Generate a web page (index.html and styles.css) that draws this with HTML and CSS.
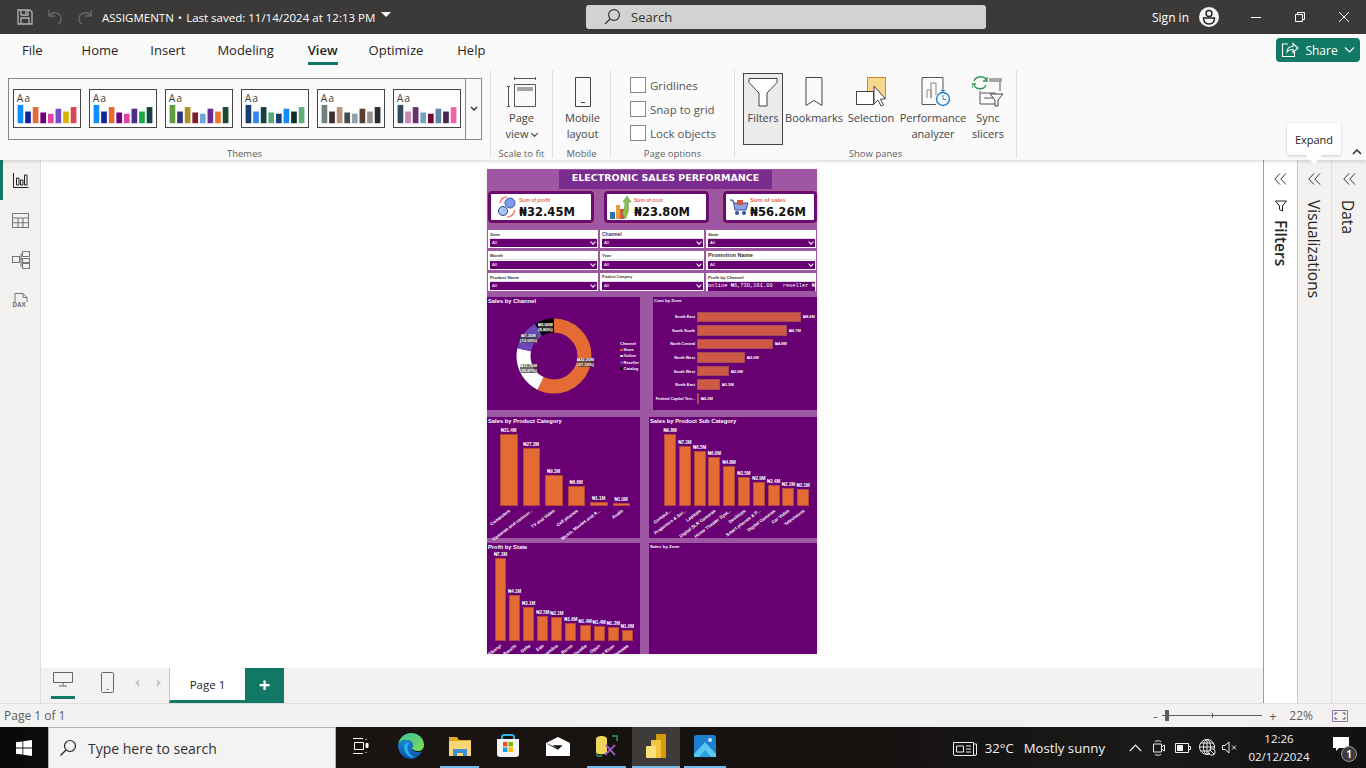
FILE: index.html
```html
<!DOCTYPE html>
<html lang="en">
  <head>
    <meta charset="utf-8">
    <link rel="stylesheet" href="styles.css">
    <title>ASSIGMENTN</title>
  </head>
  <body>
    <!-- title bar -->
    <header class="titlebar">
      <div class="quick">
        <svg class="qa" width="18" height="18" viewBox="0 0 18 18" fill="none" stroke="#b3b1af" stroke-width="1.3"><path d="M2 2h12l2 2v12H2z"/><path d="M5 2v5h7V2M5 16v-6h8v6"/><path d="M10 3v3"/></svg>
        <svg class="qa" width="18" height="18" viewBox="0 0 18 18" fill="none" stroke="#6b6a69" stroke-width="1.3"><path d="M3 2v6h6"/><path d="M3 8c3-5 11-4 12 2 .4 3-1 5-3 6"/></svg>
        <svg class="qa" width="18" height="18" viewBox="0 0 18 18" fill="none" stroke="#6b6a69" stroke-width="1.3"><path d="M15 2v6H9"/><path d="M15 8C12 3 4 4 3 10c-.4 3 1 5 3 6"/></svg>
      </div>
      <div class="doc-name">ASSIGMENTN <span class="doc-dot">•</span> Last saved: 11/14/2024 at 12:13 PM</div>
      <span class="doc-caret"></span>
      <div class="search">
        <svg width="18" height="18" viewBox="0 0 18 18" fill="none" stroke="#333" stroke-width="1.2"><circle cx="11" cy="7" r="5.4"/><path d="M7 11l-5 5"/></svg>
        <span>Search</span>
      </div>
      <div class="sign">
        <span>Sign in</span>
        <svg width="20" height="20" viewBox="0 0 20 20"><circle cx="10" cy="10" r="10" fill="#f3f2f1"/><circle cx="10" cy="6.5" r="3" fill="none" stroke="#222" stroke-width="1.4"/><path d="M4.5 11h11c0 4-2.5 6-5.5 6s-5.5-2-5.5-6z" fill="none" stroke="#222" stroke-width="1.4"/></svg>
      </div>
      <div class="win-btns">
        <svg width="12" height="12" viewBox="0 0 12 12" stroke="#fff" fill="none"><path d="M1 6.5h10"/></svg>
        <svg width="12" height="12" viewBox="0 0 12 12" stroke="#fff" fill="none"><path d="M1.5 3.5h7v7h-7zM3.5 3.5v-2h7v7h-2"/></svg>
        <svg width="12" height="12" viewBox="0 0 12 12" stroke="#fff" fill="none"><path d="M1 1l10 10M11 1L1 11"/></svg>
      </div>
    </header>

    <!-- ribbon -->
    <section class="ribbon">
      <nav class="tabs">
        <a>File</a>
        <a class="tab-home">Home</a>
        <a>Insert</a>
        <a>Modeling</a>
        <a class="active">View</a>
        <a class="tab-optimize">Optimize</a>
        <a class="tab-help">Help</a>
        <button class="share">
          <svg width="18" height="16" viewBox="0 0 18 16" fill="none" stroke="#fff" stroke-width="1.1"><path d="M7 2H1.5v12.5h12V10"/><path d="M6 10c0-4 3-5.5 6-5.5V1.5L17 6l-5 4.5v-3c-3 0-5 1-6 2.500z"/></svg>
          <span>Share</span>
          <svg width="11" height="8" viewBox="0 0 11 8" fill="none" stroke="#fff" stroke-width="1.1"><path d="M1 1.5l4.5 4.5L10 1.5"/></svg>
        </button>
      </nav>
      <div class="ribbon-body">
        <div class="group group-themes">
          <div class="gallery">
            <div class="gallery-items">
              <svg class="theme" width="68" height="39" viewBox="0 0 68 39"><text x="2" y="13">Aa</text><rect x="3" y="15.7" width="6" height="19.3" fill="#118dff"/><rect x="11" y="22.7" width="6" height="12.3" fill="#12239e"/><rect x="19" y="18" width="6" height="17" fill="#e66c37"/><rect x="27" y="23.7" width="6" height="11.3" fill="#6b007b"/><rect x="35" y="25" width="6" height="10" fill="#e044a7"/><rect x="43" y="19.7" width="6" height="15.3" fill="#744ec2"/><rect x="51" y="22.7" width="6" height="12.3" fill="#d9b300"/><rect x="59" y="18" width="6" height="17" fill="#d64550"/></svg>
              <svg class="theme" width="68" height="39" viewBox="0 0 68 39"><text x="2" y="13">Aa</text><rect x="3" y="15.7" width="6" height="19.3" fill="#118dff"/><rect x="11" y="22.7" width="6" height="12.3" fill="#12239e"/><rect x="19" y="18" width="6" height="17" fill="#e66c37"/><rect x="27" y="23.7" width="6" height="11.3" fill="#6b007b"/><rect x="35" y="25" width="6" height="10" fill="#e044a7"/><rect x="43" y="19.7" width="6" height="15.3" fill="#4b2e83"/><rect x="51" y="22.7" width="6" height="12.3" fill="#1aab40"/><rect x="59" y="18" width="6" height="17" fill="#15423e"/></svg>
              <svg class="theme" width="68" height="39" viewBox="0 0 68 39"><text x="2" y="13">Aa</text><rect x="3" y="15.7" width="6" height="19.3" fill="#5f9e3f"/><rect x="11" y="22.7" width="6" height="12.3" fill="#2f3a75"/><rect x="19" y="18" width="6" height="17" fill="#ae8f26"/><rect x="27" y="23.7" width="6" height="11.3" fill="#7f1d2b"/><rect x="35" y="25" width="6" height="10" fill="#6ea5d8"/><rect x="43" y="19.7" width="6" height="15.3" fill="#6b2a90"/><rect x="51" y="22.7" width="6" height="12.3" fill="#e8772e"/><rect x="59" y="18" width="6" height="17" fill="#1c4a2e"/></svg>
              <svg class="theme" width="68" height="39" viewBox="0 0 68 39"><text x="2" y="13">Aa</text><rect x="3" y="15.7" width="6" height="19.3" fill="#16406f"/><rect x="11" y="22.7" width="6" height="12.3" fill="#2f86f0"/><rect x="19" y="18" width="6" height="17" fill="#15423e"/><rect x="27" y="23.7" width="6" height="11.3" fill="#5aa877"/><rect x="35" y="25" width="6" height="10" fill="#143e70"/><rect x="43" y="19.7" width="6" height="15.3" fill="#118dff"/><rect x="51" y="22.7" width="6" height="12.3" fill="#0f2e2a"/><rect x="59" y="18" width="6" height="17" fill="#62ac7c"/></svg>
              <svg class="theme" width="68" height="39" viewBox="0 0 68 39"><text x="2" y="13">Aa</text><rect x="3" y="15.7" width="6" height="19.3" fill="#738080"/><rect x="11" y="22.7" width="6" height="12.3" fill="#3e2e2a"/><rect x="19" y="18" width="6" height="17" fill="#b79479"/><rect x="27" y="23.7" width="6" height="11.3" fill="#434c50"/><rect x="35" y="25" width="6" height="10" fill="#8fa3a8"/><rect x="43" y="19.7" width="6" height="15.3" fill="#5c3d30"/><rect x="51" y="22.7" width="6" height="12.3" fill="#9a948d"/><rect x="59" y="18" width="6" height="17" fill="#2a2d2e"/></svg>
              <svg class="theme" width="68" height="39" viewBox="0 0 68 39"><text x="2" y="13">Aa</text><rect x="3" y="15.7" width="6" height="19.3" fill="#344a5f"/><rect x="11" y="22.7" width="6" height="12.3" fill="#c987b0"/><rect x="19" y="18" width="6" height="17" fill="#66336e"/><rect x="27" y="23.7" width="6" height="11.3" fill="#78a0c0"/><rect x="35" y="25" width="6" height="10" fill="#6e0a35"/><rect x="43" y="19.7" width="6" height="15.3" fill="#5f86a8"/><rect x="51" y="22.7" width="6" height="12.3" fill="#45264f"/><rect x="59" y="18" width="6" height="17" fill="#ee66a6"/></svg>
            </div>
            <div class="gallery-more"><svg width="8" height="6" viewBox="0 0 8 6" fill="none" stroke="#333" stroke-width="1.5"><path d="M1 1l3 3 3-3"/></svg></div>
          </div>
          <div class="group-label">Themes</div>
        </div>

        <div class="group group-scale">
          <div class="rib-btn">
            <svg width="30" height="30" viewBox="0 0 30 30" fill="none" stroke="#555"><path d="M7.5 1.5h21M7.5 0v3M28.5 0v3M1.5 9.5v20M0 9.5h3M0 29.5h3"/><path d="M7.5 7.5h21v22h-21z"/><rect x="10" y="10" width="16" height="4" fill="#a6a6a6" stroke="none"/></svg>
            <span>Page<br>view <i class="mini-chev"></i></span>
          </div>
          <div class="group-label">Scale to fit</div>
        </div>

        <div class="group group-mobile">
          <div class="rib-btn">
            <svg width="18" height="30" viewBox="0 0 18 30" fill="none" stroke="#444"><path d="M1.5.5h15v29h-15z"/><path d="M7 25.5h4"/></svg>
            <span>Mobile<br>layout</span>
          </div>
          <div class="group-label">Mobile</div>
        </div>

        <div class="group group-options">
          <div class="checks">
            <label class="check"><i></i>Gridlines</label>
            <label class="check"><i></i>Snap to grid</label>
            <label class="check"><i></i>Lock objects</label>
          </div>
          <div class="group-label">Page options</div>
        </div>

        <div class="group group-panes">
          <div class="pane-btns">
            <div class="rib-btn pane-filters selected">
              <svg width="30" height="30" viewBox="0 0 30 30" fill="#fff" stroke="#444"><path d="M1 1.5h28v4L19 16v13h-8V16L1 5.5z"/></svg>
              <span>Filters</span>
            </div>
            <div class="rib-btn pane-bookmarks">
              <svg width="18" height="30" viewBox="0 0 18 30" fill="none" stroke="#444"><path d="M1 .5h16v28l-8-5-8 5z"/></svg>
              <span>Bookmarks</span>
            </div>
            <div class="rib-btn pane-selection">
              <svg width="32" height="30" viewBox="0 0 32 30"><rect x="11.5" y=".5" width="18" height="20" fill="#f8d78e" stroke="#d9822b"/><rect x=".5" y="14.5" width="17" height="13" fill="#fff" stroke="#444"/><path d="M18 9v18l4-4 3 6 2.5-1-3-6h5z" fill="#fff" stroke="#444"/></svg>
              <span>Selection</span>
            </div>
            <div class="rib-btn pane-perf">
              <svg width="30" height="30" viewBox="0 0 30 30" fill="none"><path d="M22 16V.5H1v27h14" stroke="#555"/><path d="M6 21v-8h4v8M10 21V6h5v12" stroke="#888"/><circle cx="22" cy="22" r="6.5" fill="#fff" stroke="#1b84d4" stroke-width="1.4"/><path d="M22 18v4.500h3M20 13.500h4" stroke="#1b84d4"/></svg>
              <span>Performance<br>analyzer</span>
            </div>
            <div class="rib-btn pane-sync">
              <svg width="32" height="32" viewBox="0 0 32 32" fill="none"><path d="M17 3h13v4H17z" fill="#a6a6a6"/><path d="M8 16v13h16M28 7v9M9 18h14v5H12" stroke="#555"/><path d="M14 5c-2-5-10-4-12 1M2 10c2 5 10 5 12 0M11 6h4V2M4 9H0v4" stroke="#2f9a57" stroke-width="1.4"/><path d="M18 19h13l-5 6v6h-3v-6z" fill="#fff" stroke="#444"/></svg>
              <span>Sync<br>slicers</span>
            </div>
          </div>
          <div class="group-label">Show panes</div>
        </div>
      </div>
      <svg class="ribbon-collapse" width="10" height="6" viewBox="0 0 10 6" fill="none" stroke="#333" stroke-width="1.6"><path d="M1 5l4-4 4 4"/></svg>
    </section>
    <div class="tooltip">Expand</div>

    <div class="workspace">
      <aside class="rail">
        <div class="rail-item active">
          <svg width="16" height="16" viewBox="0 0 16 16" fill="none" stroke="#222"><path d="M.5 1v14.5h15M3.5 13V6H6v7zM7.500 13V8H10v5zM11.500 13V3H14v10z"/></svg>
        </div>
        <div class="rail-item">
          <svg width="17" height="15" viewBox="0 0 17 15" fill="none" stroke="#777" stroke-width="1.1"><path d="M.5.5h16v14H.5zM.5 5h16M.5 9.7h16M6 5v9.5M11 5v9.5"/></svg>
        </div>
        <div class="rail-item">
          <svg width="18" height="18" viewBox="0 0 18 18" fill="none" stroke="#777" stroke-width="1.1"><path d="M.5 5.5h7v6h-7zM10.5.5h7v5h-7zM10.5 7.5h7v4h-7zM10.5 12.5h7v5h-7zM7.5 8h3M9 3v12h1.5M9 3h1.5"/></svg>
        </div>
        <div class="rail-item rail-dax">
          <svg width="16" height="14" viewBox="0 0 16 14" fill="none" stroke="#777"><path d="M2 9V.5h8l4 4V9"/><path d="M10 .5v4h4"/></svg>
          <span>DAX</span>
        </div>
      </aside>

      <div class="center">
        <main class="canvas">
          <div class="report">
            <div class="banner-wrap"><h1 class="banner">ELECTRONIC SALES PERFORMANCE</h1></div>

            <div class="kpis">
              <div class="kpi kpi-profit">
                <svg class="kpi-icon" width="23" height="22" viewBox="0 0 23 22"><circle cx="14" cy="7" r="5" fill="#7f9bec" stroke="#3a5aa8"/><circle cx="7" cy="15" r="4.5" fill="#a9c4f0" stroke="#244a82"/><path d="M4 7c1-4 4-6 7-6M19 14c-1 4-4 7-8 7" fill="none" stroke="#ea7a6a" stroke-width="1.3"/></svg>
                <div class="kpi-text"><span class="kpi-label">Sum of profit</span><strong>₦32.45M</strong></div>
              </div>
              <div class="kpi kpi-cost">
                <svg class="kpi-icon" width="24" height="25" viewBox="0 0 24 25"><rect x="1" y="17" width="5" height="7" fill="#2f6fb0"/><rect x="7" y="10" width="4" height="14" fill="#e8a13a"/><rect x="11" y="14" width="4" height="10" fill="#d9533c"/><path d="M16 24c4-6 4-12 3-17h3l-4-6-4 6h2c0 5-1 8-3 11z" fill="#8bbd4a" stroke="#4f8a2c" stroke-width=".5"/></svg>
                <div class="kpi-text"><span class="kpi-label">Sum of cost</span><strong>₦23.80M</strong></div>
              </div>
              <div class="kpi kpi-sales">
                <svg class="kpi-icon" width="19" height="17" viewBox="0 0 19 17"><path d="M0 1h3l2 10h11l2-7H4" fill="#8aa0e0" stroke="#34509a"/><rect x="7" y="1" width="6" height="5" fill="#d9553f"/><circle cx="7" cy="14" r="2" fill="#34509a"/><circle cx="14" cy="14" r="2" fill="#34509a"/></svg>
                <div class="kpi-text"><span class="kpi-label">Sum of sales</span><strong>₦56.26M</strong></div>
              </div>
            </div>

            <div class="slicers">
              <div class="slicer"><span class="slicer-name">Zone</span><div class="drop">All<i></i></div></div>
              <div class="slicer"><span class="slicer-name name-lg">Channel</span><div class="drop">All<i></i></div></div>
              <div class="slicer"><span class="slicer-name">State</span><div class="drop">All<i></i></div></div>
              <div class="slicer"><span class="slicer-name">Month</span><div class="drop">All<i></i></div></div>
              <div class="slicer"><span class="slicer-name">Year</span><div class="drop">All<i></i></div></div>
              <div class="slicer"><span class="slicer-name name-xl">Promotion Name</span><div class="drop">All<i></i></div></div>
              <div class="slicer"><span class="slicer-name">Product Name</span><div class="drop">All<i></i></div></div>
              <div class="slicer"><span class="slicer-name name-sm">Product Category</span><div class="drop">All<i></i></div></div>
              <div class="slicer"><span class="slicer-name">Profit by Channel</span><div class="drop ticker"><span>online ₦6,730,161.00</span><span>reseller ₦</span></div></div>
            </div>

            <div class="visual-row row-one">
              <section class="visual donut-visual">
                <h2 class="visual-title">Sales by Channel</h2>
                <svg class="donut" width="76" height="76" viewBox="0 0 76 76">
                  <g fill="none" stroke-width="14" transform="rotate(-90 38 38)">
                    <circle cx="38" cy="38" r="30.5" pathLength="100" stroke="#e46c34" stroke-dasharray="57.3 100"/>
                    <circle cx="38" cy="38" r="30.5" pathLength="100" stroke="#fff" stroke-dasharray="21 100" stroke-dashoffset="-57.3"/>
                    <circle cx="38" cy="38" r="30.5" pathLength="100" stroke="#6b47b8" stroke-dasharray="13.2 100" stroke-dashoffset="-78.3"/>
                    <circle cx="38" cy="38" r="30.5" pathLength="100" stroke="#000" stroke-dasharray="8.5 100" stroke-dashoffset="-91.5"/>
                  </g>
                </svg>
                <span class="slice-tag tag-store">₦32.30M<br>(57.33%)</span>
                <span class="slice-tag tag-online">₦11.70M<br>(20.87%)</span>
                <span class="slice-tag tag-reseller">₦7.30M<br>(13.00%)</span>
                <span class="slice-tag tag-catalog">₦5.00M<br>(8.80%)</span>
                <ul class="legend">
                  <li class="legend-head">Channel</li>
                  <li><i class="dot-store"></i>Store</li>
                  <li><i class="dot-online"></i>Online</li>
                  <li><i class="dot-reseller"></i>Reseller</li>
                  <li><i class="dot-catalog"></i>Catalog</li>
                </ul>
              </section>

              <section class="visual zone-visual">
                <h2 class="visual-title title-thin">Cost by Zone</h2>
                <div class="hbars">
                  <div class="hbar"><span class="hbar-name">South East</span><i style="width:104px"></i><span class="val">₦8.6M</span></div>
                  <div class="hbar"><span class="hbar-name">South South</span><i style="width:90px"></i><span class="val">₦6.7M</span></div>
                  <div class="hbar"><span class="hbar-name">North Central</span><i style="width:76px"></i><span class="val">₦4.8M</span></div>
                  <div class="hbar"><span class="hbar-name">North West</span><i style="width:48px"></i><span class="val">₦3.0M</span></div>
                  <div class="hbar"><span class="hbar-name">South West</span><i style="width:32px"></i><span class="val">₦2.0M</span></div>
                  <div class="hbar"><span class="hbar-name">North East</span><i style="width:23px"></i><span class="val">₦1.5M</span></div>
                  <div class="hbar"><span class="hbar-name">Federal Capital Terr...</span><i style="width:2px"></i><span class="val">₦0.2M</span></div>
                </div>
              </section>
            </div>

            <div class="visual-row row-two">
              <section class="visual left-visual">
                <h2 class="visual-title">Sales by Product Category</h2>
                <div class="columns cols-category">
                  <div class="col"><span class="val">₦31.4M</span><i style="height:72px"></i><span class="tick">Computers</span></div>
                  <div class="col"><span class="val">₦27.3M</span><i style="height:58px"></i><span class="tick">Cameras and camcor...</span></div>
                  <div class="col"><span class="val">₦9.3M</span><i style="height:31px"></i><span class="tick">TV and Video</span></div>
                  <div class="col"><span class="val">₦6.6M</span><i style="height:20px"></i><span class="tick">Cell phones</span></div>
                  <div class="col"><span class="val">₦1.1M</span><i style="height:4px"></i><span class="tick">Music, Movies and A...</span></div>
                  <div class="col"><span class="val">₦1.0M</span><i style="height:3px"></i><span class="tick">Audio</span></div>
                </div>
              </section>
              <section class="visual right-visual">
                <h2 class="visual-title">Sales by Product Sub Category</h2>
                <div class="columns cols-sub">
                  <div class="col"><span class="val">₦9.8M</span><i style="height:72px"></i><span class="tick">Comput...</span></div>
                  <div class="col"><span class="val">₦7.3M</span><i style="height:60px"></i><span class="tick">Projectors &amp; Scr...</span></div>
                  <div class="col"><span class="val">₦6.5M</span><i style="height:55px"></i><span class="tick">Laptops</span></div>
                  <div class="col"><span class="val">₦6.0M</span><i style="height:49px"></i><span class="tick">Digital SLR Cameras</span></div>
                  <div class="col"><span class="val">₦4.8M</span><i style="height:40px"></i><span class="tick">Home Theater Syst...</span></div>
                  <div class="col"><span class="val">₦3.5M</span><i style="height:29px"></i><span class="tick">Desktops</span></div>
                  <div class="col"><span class="val">₦2.9M</span><i style="height:24px"></i><span class="tick">Smart phones &amp; P...</span></div>
                  <div class="col"><span class="val">₦2.4M</span><i style="height:21px"></i><span class="tick">Digital Cameras</span></div>
                  <div class="col"><span class="val">₦2.1M</span><i style="height:18px"></i><span class="tick">Car Video</span></div>
                  <div class="col"><span class="val">₦2.1M</span><i style="height:17px"></i><span class="tick">Televisions</span></div>
                </div>
              </section>
            </div>

            <div class="visual-row row-three">
              <section class="visual left-visual">
                <h2 class="visual-title">Profit by State</h2>
                <div class="columns cols-state">
                  <div class="col"><span class="val">₦7.3M</span><i style="height:83px"></i><span class="tick">Ebonyi</span></div>
                  <div class="col"><span class="val">₦4.1M</span><i style="height:46px"></i><span class="tick">Bauchi</span></div>
                  <div class="col"><span class="val">₦3.1M</span><i style="height:34px"></i><span class="tick">Delta</span></div>
                  <div class="col"><span class="val">₦2.5M</span><i style="height:25px"></i><span class="tick">Edo</span></div>
                  <div class="col"><span class="val">₦2.1M</span><i style="height:24px"></i><span class="tick">Anambra</span></div>
                  <div class="col"><span class="val">₦1.6M</span><i style="height:18px"></i><span class="tick">Borno</span></div>
                  <div class="col"><span class="val">₦1.4M</span><i style="height:16px"></i><span class="tick">Gombe</span></div>
                  <div class="col"><span class="val">₦1.4M</span><i style="height:15px"></i><span class="tick">Ogun</span></div>
                  <div class="col"><span class="val">₦1.2M</span><i style="height:14px"></i><span class="tick">Cross River</span></div>
                  <div class="col"><span class="val">₦1.0M</span><i style="height:11px"></i><span class="tick">Adamawa</span></div>
                </div>
              </section>
              <section class="visual right-visual">
                <h2 class="visual-title title-thin">Sales by Zone</h2>
              </section>
            </div>
          </div>
        </main>

        <div class="page-tabs">
          <div class="view-btn view-desktop">
            <svg width="20" height="15" viewBox="0 0 20 15" fill="none" stroke="#666"><path d="M.5.5h19v10H.5zM10 10.5v3M6 14h8"/></svg>
          </div>
          <div class="view-btn view-phone">
            <svg width="13" height="21" viewBox="0 0 13 21" fill="none" stroke="#666"><path d="M.5 1.5a1 1 0 0 1 1-1h10a1 1 0 0 1 1 1v18a1 1 0 0 1-1 1h-10a1 1 0 0 1-1-1z"/><path d="M5.5 17.5h2"/></svg>
          </div>
          <span class="tri tri-left"></span>
          <span class="tri tri-right"></span>
          <div class="page-tab">Page 1</div>
          <div class="page-add">+</div>
        </div>
      </div>

      <aside class="collapsed-pane pane-white">
        <svg class="pane-chev" width="13" height="12" viewBox="0 0 13 12" fill="none" stroke="#333"><path d="M6 .5L.8 6 6 11.5M12 .5L6.8 6 12 11.5"/></svg>
        <svg class="pane-funnel" width="12" height="12" viewBox="0 0 12 12" fill="none" stroke="#222"><path d="M.5 1h11L7.5 6v5l-3-1.5V6z"/></svg>
        <span class="pane-name pane-name-filters">Filters</span>
      </aside>
      <aside class="collapsed-pane">
        <svg class="pane-chev" width="13" height="12" viewBox="0 0 13 12" fill="none" stroke="#333"><path d="M6 .5L.8 6 6 11.5M12 .5L6.8 6 12 11.5"/></svg>
        <span class="pane-name">Visualizations</span>
      </aside>
      <aside class="collapsed-pane pane-last">
        <svg class="pane-chev" width="13" height="12" viewBox="0 0 13 12" fill="none" stroke="#333"><path d="M6 .5L.8 6 6 11.5M12 .5L6.8 6 12 11.5"/></svg>
        <span class="pane-name">Data</span>
      </aside>
    </div>

    <footer class="status">
      <span>Page 1 of 1</span>
      <div class="zoom">
        <b class="zoom-minus">-</b>
        <div class="slider"><i class="thumb"></i><i class="mid"></i></div>
        <b>+</b>
        <span class="zoom-pct">22%</span>
        <svg width="16" height="12" viewBox="0 0 16 12" fill="none" stroke="#555"><path d="M.5.5h15v11H.5z" stroke="#8a6fa8"/><path d="M3 5V3h2.5M10.5 3H13v2M13 7v2h-2.5M5.5 9H3V7"/></svg>
      </div>
    </footer>

    <!-- windows taskbar -->
    <div class="taskbar">
      <div class="start">
        <svg width="16" height="16" viewBox="0 0 16 16" fill="#fff"><path d="M0 2.3l6.5-.9v6.2H0zM7.3 1.3L16 0v7.6H7.3zM0 8.4h6.5v6.2L0 13.700zM7.3 8.4H16V16l-8.700-1.200z"/></svg>
      </div>
      <div class="task-search">
        <svg width="18" height="18" viewBox="0 0 18 18" fill="none" stroke="#222" stroke-width="1.2"><circle cx="11" cy="7" r="5.5"/><path d="M7 11l-5.5 5.5"/></svg>
        <span>Type here to search</span>
      </div>
      <div class="task-apps">
        <div class="app app-taskview">
          <svg width="16" height="16" viewBox="0 0 16 16" fill="none" stroke="#fff"><path d="M0 .5h10M0 15.5h10M1.5 4.5h9v7h-9zM13 1v1M13 14v1"/><path d="M13 5.5h2v4h-2z" fill="#fff"/></svg>
        </div>
        <div class="app app-edge">
          <svg width="26" height="26" viewBox="0 0 26 26"><defs><linearGradient id="edgeA" x1="0" y1="0" x2="1" y2="1"><stop offset="0" stop-color="#36c3a0"/><stop offset="1" stop-color="#7ddc52"/></linearGradient><linearGradient id="edgeB" x1="0" y1="0" x2="0" y2="1"><stop offset="0" stop-color="#1a86d8"/><stop offset="1" stop-color="#0e4fa8"/></linearGradient></defs><path d="M13 0c8 0 13 6 13 12 0 4-3 6-6 6-4 0-6-2-6-3 0-1 1-1 1-3 0-3-3-5-7-5C5 7 1 9 0 12 1 5 6 0 13 0z" fill="url(#edgeA)"/><path d="M0 12c1-3 5-5 8-5 4 0 7 2 7 5 0 2-1 2-1 3 0 2 2 4 6 4 1 0 3 0 4-1-2 5-7 8-11 8-7 0-13-6-13-14z" fill="url(#edgeB)"/><path d="M6 14c0-3 3-5 5-4-2 2-2 7 1 11 2 2 4 3 5 3-6 2-11-4-11-10z" fill="#1eb4e8"/></svg>
        </div>
        <div class="app app-files">
          <svg width="22" height="19" viewBox="0 0 22 19"><path d="M0 0h8l2 3h12v16H0z" fill="#e3a92b"/><path d="M0 4h22v15H0z" fill="#f8d673"/><path d="M4 19v-7h14v7h-4v-3H8v3z" fill="#3d8fd4"/></svg>
        </div>
        <div class="app app-store">
          <svg width="24" height="24" viewBox="0 0 24 24"><path d="M6 6V3a2 2 0 0 1 2-2h8a2 2 0 0 1 2 2v3" fill="none" stroke="#2fb4e9" stroke-width="2"/><path d="M1 5h22v15a3 3 0 0 1-3 3H4a3 3 0 0 1-3-3z" fill="#f3f3f3"/><rect x="7" y="8" width="4.5" height="4.5" fill="#f25022"/><rect x="12.5" y="8" width="4.5" height="4.5" fill="#7fba00"/><rect x="7" y="13.5" width="4.5" height="4.5" fill="#00a4ef"/><rect x="12.5" y="13.5" width="4.5" height="4.5" fill="#ffb900"/></svg>
        </div>
        <div class="app app-mail">
          <svg width="24" height="19" viewBox="0 0 24 19" fill="#fff"><path d="M0 6L12 0l12 6v13H0z"/><path d="M1 6.5l11 6 4-4H7l5 3" fill="#111" stroke="#111" stroke-width=".5"/></svg>
        </div>
        <div class="app app-tool">
          <svg width="24" height="24" viewBox="0 0 24 24" fill="none"><path d="M1 5c0-4 11-4 11 0v13c0 3-11 3-11 0z" fill="#f2d55c"/><path d="M17 2h5v5M2 22h5M2 22v-3" stroke="#2e9a5a" stroke-width="1.5"/><path d="M10 21L20 11M11 11l9 10" stroke="#9254b8" stroke-width="2"/></svg>
        </div>
        <div class="app app-pbi">
          <svg width="20" height="24" viewBox="0 0 20 24"><rect x="10" y="0" width="10" height="24" rx="1" fill="#d69a0e"/><rect x="5" y="6" width="10" height="18" rx="1" fill="#f0c53c"/><rect x="0" y="12" width="10" height="12" rx="1" fill="#f8e07a"/></svg>
        </div>
        <div class="app app-photos">
          <svg width="22" height="22" viewBox="0 0 22 22"><rect width="22" height="22" rx="3" fill="#1d7fd0"/><circle cx="16" cy="5" r="2" fill="#cfe6fa"/><path d="M0 19l11-12 11 12v3H0z" fill="#58c8f2"/><path d="M5 22l6-7 6 7z" fill="#2aa0e4"/></svg>
        </div>
      </div>
      <div class="tray">
        <svg class="tray-news" width="24" height="16" viewBox="0 0 24 16" fill="none" stroke="#eee"><path d="M.5 2.5h20v13H2A1.5 1.5 0 0 1 .5 14zM20.500 4h3v10a1.500 1.500 0 0 1-3 0"/><path d="M3.5 6h7v6h-7zM13 6h5M13 9h5M13 12h5"/></svg>
        <span class="weather">32°C</span>
        <span class="weather sunny">Mostly sunny</span>
        <svg class="tray-up" width="13" height="8" viewBox="0 0 13 8" fill="none" stroke="#eee" stroke-width="1.1"><path d="M.8 7l5.7-6 5.7 6"/></svg>
        <svg class="tray-ic tray-meet" width="14" height="18" viewBox="0 0 14 18" fill="none" stroke="#eee"><path d="M1.5 5h8v8h-8zM9.5 8l3-2v6l-3-2M3 2.5c2-1 4-1 6 0M3 15.5c2 1 4 1 6 0"/></svg>
        <svg class="tray-ic tray-battery" width="16" height="10" viewBox="0 0 16 10" fill="none" stroke="#eee"><path d="M.5.5h13v9H.5zM14 3.5h1.5v3H14"/><path d="M2 2h6v6H2z" fill="#eee" stroke="none"/></svg>
        <svg class="tray-ic tray-globe" width="17" height="17" viewBox="0 0 17 17" fill="none" stroke="#eee"><circle cx="8" cy="8" r="7.5"/><path d="M.5 8h15M8 .5v15M2 4h12M2 12h12"/><ellipse cx="8" cy="8" rx="3.5" ry="7.5"/><circle cx="13" cy="13" r="3.2" fill="#111"/><path d="M11 11l4 4"/></svg>
        <svg class="tray-ic" width="15" height="13" viewBox="0 0 15 13" fill="none" stroke="#eee"><path d="M.5 4.5H3L7 1v11L3 8.5H.5zM10 4.5l4 4M14 4.500l-4 4"/></svg>
        <div class="clock"><span>12:26</span><span>02/12/2024</span></div>
        <div class="notify">
          <svg width="16" height="15" viewBox="0 0 16 15" fill="#fff"><path d="M0 0h16v11H6l-3 3v-3H0z"/></svg>
          <span class="notify-num">1</span>
        </div>
      </div>
    </div>
  </body>
</html>
```

FILE: styles.css
```css
* {
  box-sizing: border-box;
}
html,
body {
  margin: 0;
  height: 768px;
  overflow: hidden;
}
body {
  width: 1366px;
  display: flex;
  flex-direction: column;
  position: relative;
  background: #f3f2f1;
  color: #252423;
  font-family: "Open Sans", "Noto Sans", sans-serif;
  font-size: 12px;
}
svg {
  display: block;
  flex: none;
}
h1,
h2,
ul {
  margin: 0;
  padding: 0;
}

/* title bar */
.titlebar {
  height: 34px;
  flex: none;
  display: flex;
  align-items: center;
  background: #3b3a39;
  color: #fff;
  padding-left: 16px;
}
.quick {
  display: flex;
  gap: 12px;
  width: 86px;
}
.doc-name {
  font-size: 11.5px;
  white-space: nowrap;
  width: 279px;
}
.doc-dot {
  margin: 0 1px;
}
.doc-caret {
  border-left: 5px solid transparent;
  border-right: 5px solid transparent;
  border-top: 5px solid #fff;
  margin: -6px 0 0 0;
}
.search {
  width: 400px;
  height: 24px;
  margin-left: 195px;
  background: #d2d2d2;
  border-radius: 3px;
  display: flex;
  align-items: center;
  gap: 10px;
  padding-left: 17px;
  color: #323130;
  font-size: 13px;
}
.sign {
  display: flex;
  align-items: center;
  gap: 10px;
  margin-left: 166px;
  font-size: 12px;
}
.win-btns {
  display: flex;
  gap: 32px;
  margin-left: 31px;
}

/* ribbon */
.ribbon {
  height: 126px;
  flex: none;
  background: #fafafa;
  box-shadow: 0 1px 4px rgba(0, 0, 0, 0.18);
  position: relative;
  z-index: 2;
}
.tabs {
  height: 32px;
  margin-bottom: 4px;
  display: flex;
  align-items: center;
  gap: 32px;
  padding: 0 6px 0 22px;
  font-size: 13px;
}
.tab-home {
  margin-left: 7px;
}
.tabs a.active {
  font-weight: 600;
  position: relative;
  margin-left: 2px;
}
.tabs a.active::after {
  content: "";
  position: absolute;
  left: 0;
  right: 0;
  bottom: -6px;
  height: 3px;
  background: #117865;
}
.tab-optimize {
  margin-left: -1px;
}
.tab-help {
  margin-left: 2px;
}
.share {
  margin-left: auto;
  width: 84px;
  height: 24px;
  border: none;
  border-radius: 4px;
  background: #117865;
  color: #fff;
  font: inherit;
  font-size: 12px;
  display: flex;
  align-items: center;
  justify-content: center;
  gap: 6px;
  padding: 0;
}
.ribbon-body {
  display: flex;
  height: 88px;
  padding-left: 8px;
}
.group {
  display: flex;
  flex-direction: column;
  border-right: 1px solid #e1dfdd;
  height: 88px;
  position: relative;
}
.group-label {
  position: absolute;
  left: 0;
  right: 0;
  bottom: -2px;
  text-align: center;
  font-size: 9.5px;
  line-height: 13px;
  color: #605e5c;
}
.group-themes {
  width: 483px;
  padding-top: 8px;
}
.group-themes .group-label {
  right: 9px;
}
.gallery {
  width: 474px;
  height: 62px;
  border: 1px solid #8a8886;
  display: flex;
}
.gallery-items {
  flex: 1;
  display: flex;
  gap: 8px;
  padding: 10px 0 0 4px;
}
.gallery-more {
  width: 16px;
  border-left: 1px solid #8a8886;
  display: flex;
  align-items: center;
  justify-content: center;
}
.theme {
  background: #fff;
  border: 1px solid #444;
}
.theme text {
  font-size: 11px;
  letter-spacing: 1px;
  fill: #444;
  font-family: "Open Sans", sans-serif;
}
.group-scale {
  width: 62px;
}
.group-mobile {
  width: 58px;
  padding-left: 2px;
}
.group-options {
  width: 124px;
}
.group-panes {
  width: 282px;
}
.rib-btn {
  display: flex;
  flex-direction: column;
  align-items: center;
  padding-top: 7px;
  font-size: 11px;
  line-height: 16px;
  text-align: center;
  color: #444;
  white-space: nowrap;
}
.rib-btn span {
  margin-top: 3px;
}
.mini-chev {
  display: inline-block;
  width: 5px;
  height: 5px;
  border-right: 1.2px solid #333;
  border-bottom: 1.2px solid #333;
  transform: rotate(45deg);
  margin: 0 0 2px 1px;
}
.checks {
  display: flex;
  flex-direction: column;
  gap: 8px;
  padding: 7px 0 0 19px;
}
.check {
  display: flex;
  align-items: center;
  gap: 4px;
  font-size: 11.5px;
  height: 16px;
  color: #555;
}
.check i {
  width: 16px;
  height: 16px;
  background: #fff;
  border: 1px solid #8a8886;
}
.pane-btns {
  display: flex;
}
.pane-filters {
  width: 40px;
  height: 72px;
  margin: 3px 0 0 8px;
  padding-top: 3px;
  background: #ebebeb;
  border: 1px solid #444;
}
.pane-bookmarks {
  width: 60px;
  margin-left: 1px;
}
.pane-selection {
  width: 54px;
}
.pane-selection svg {
  margin-left: 2px;
}
.pane-perf {
  width: 70px;
}
.pane-perf svg {
  margin-left: 6px;
}
.pane-sync {
  width: 40px;
  padding-top: 5px;
}
.ribbon-collapse {
  position: absolute;
  right: 4px;
  bottom: 5px;
}
.tooltip {
  position: absolute;
  left: 1287px;
  top: 123px;
  width: 54px;
  height: 32px;
  background: #fff;
  border-radius: 2px;
  box-shadow: 0 1px 3px rgba(0, 0, 0, 0.2);
  display: flex;
  align-items: center;
  justify-content: center;
  font-size: 11px;
  z-index: 5;
}
.tooltip::after {
  content: "";
  position: absolute;
  left: 19px;
  top: 32px;
  border-left: 8px solid transparent;
  border-right: 8px solid transparent;
  border-top: 9px solid #fff;
}

/* workspace */
.workspace {
  height: 543px;
  flex: none;
  display: flex;
}
.rail {
  width: 41px;
  flex: none;
  border-right: 1px solid #e1dfdd;
  background: #f3f2f1;
}
.rail-item {
  height: 40px;
  display: flex;
  flex-direction: column;
  align-items: center;
  justify-content: center;
  padding-left: 1px;
}
.rail-item.active {
  border-left: 3px solid #117865;
  padding: 0 1px 0 0;
}
.rail-dax span {
  font-size: 6.5px;
  font-weight: 700;
  line-height: 5px;
  color: #777;
  margin-top: -5px;
  background: #f3f2f1;
  margin-right: 3px;
}
.center {
  flex: 1;
  display: flex;
  flex-direction: column;
  min-width: 0;
}
.canvas {
  flex: 1;
  background: #fff;
  padding-top: 9px;
  display: flex;
  justify-content: center;
}
.page-tabs {
  height: 35px;
  flex: none;
  display: flex;
  align-items: stretch;
  background: #f3f2f1;
}
.view-btn {
  display: flex;
  align-items: center;
  justify-content: center;
  padding-bottom: 5px;
}
.view-desktop {
  width: 24px;
  margin-left: 10px;
  border-bottom: 3px solid #117865;
  margin-bottom: 4px;
}
.view-phone {
  width: 14px;
  margin-left: 25px;
  padding-bottom: 6px;
}
.tri {
  align-self: center;
  border-top: 4px solid transparent;
  border-bottom: 4px solid transparent;
  margin-bottom: 5px;
}
.tri-left {
  border-right: 4px solid #c8c6c4;
  margin-left: 21px;
}
.tri-right {
  border-left: 4px solid #c8c6c4;
  margin-left: 18px;
}
.page-tab {
  width: 76px;
  margin-left: 8px;
  background: #fff;
  border-left: 1px solid #c8c6c4;
  border-bottom: 3px solid #117865;
  display: flex;
  align-items: center;
  justify-content: center;
  font-size: 11.5px;
}
.page-add {
  width: 39px;
  background: #117865;
  color: #fff;
  display: flex;
  align-items: center;
  justify-content: center;
  font-size: 20px;
  font-weight: 700;
  padding-bottom: 3px;
}
.collapsed-pane {
  width: 34px;
  flex: none;
  border-left: 1px solid #c8c6c4;
  background: #f3f2f1;
  display: flex;
  flex-direction: column;
  align-items: center;
  padding-top: 13px;
}
.pane-white {
  background: #fff;
  border-left-color: #a19f9d;
}
.pane-last {
  width: 35px;
  border-left-color: #e1dfdd;
}
.pane-funnel {
  margin-top: 15px;
}
.pane-name {
  writing-mode: vertical-rl;
  font-size: 15.5px;
  line-height: 18px;
  margin-top: 15px;
  margin-right: 2px;
  white-space: nowrap;
}
.pane-name-filters {
  margin-top: 8px;
  margin-right: 0;
  font-weight: 600;
}

/* status bar */
.status {
  height: 24px;
  flex: none;
  border-top: 1px solid #e1dfdd;
  display: flex;
  align-items: center;
  justify-content: space-between;
  padding: 0 18px 0 4px;
  font-size: 12px;
  color: #605e5c;
}
.zoom {
  display: flex;
  align-items: center;
}
.zoom b {
  font-weight: 400;
  font-size: 13px;
  width: 10px;
}
.slider {
  width: 100px;
  height: 1px;
  background: #605e5c;
  position: relative;
  margin: 0 7px 0 -1px;
}
.thumb {
  position: absolute;
  left: 3px;
  top: -5px;
  width: 4px;
  height: 11px;
  background: #605e5c;
}
.mid {
  position: absolute;
  left: 50px;
  top: -2px;
  width: 1px;
  height: 5px;
  background: #605e5c;
}
.zoom-pct {
  margin: 0 19px 0 10px;
  font-size: 12px;
}

/* taskbar */
.taskbar {
  height: 41px;
  flex: none;
  display: flex;
  background: linear-gradient(90deg, #0a0a0a, #1a1512 30%, #14110f 60%, #1b1a19 85%, #111);
  color: #f3f3f3;
}
.start {
  width: 48px;
  display: flex;
  align-items: center;
  justify-content: center;
}
.task-search {
  width: 288px;
  background: #f3f3f3;
  border: 1px solid #b5b5b5;
  border-bottom: none;
  display: flex;
  align-items: center;
  gap: 11px;
  padding-left: 10px;
  color: #323130;
  font-size: 14px;
}
.task-apps {
  display: flex;
  align-items: stretch;
}
.app {
  display: flex;
  align-items: center;
  justify-content: center;
  padding-bottom: 3px;
  position: relative;
}
.app-taskview,
.app-edge,
.app-store,
.app-mail,
.app-photos {
  width: 50px;
}
.app-files,
.app-tool {
  width: 47px;
}
.app-pbi {
  width: 48px;
  margin-left: 2px;
  background: #3d3c3a;
}
.app-files::after,
.app-tool::after,
.app-pbi::after,
.app-photos::after {
  content: "";
  position: absolute;
  left: 4px;
  right: 4px;
  bottom: 0;
  height: 2px;
  background: #76b9ed;
}
.app-pbi::after {
  left: 0;
  right: 0;
}
.tray {
  margin-left: auto;
  display: flex;
  align-items: center;
  font-size: 13.2px;
}
.weather {
  margin-left: 8px;
}
.weather.sunny {
  margin-left: 10px;
}
.tray-up {
  margin: 0 2px 0 24px;
}
.tray-ic {
  margin-left: 6px;
}
.tray-meet {
  margin-left: 8px;
}
.tray-battery {
  margin-left: 9px;
}
.tray-globe {
  margin-left: 8px;
}
.clock {
  display: flex;
  flex-direction: column;
  align-items: center;
  font-size: 11.5px;
  line-height: 18px;
  margin-left: 8px;
  width: 68px;
}
.notify {
  width: 33px;
  margin-left: 20px;
  position: relative;
  align-self: stretch;
  display: flex;
  align-items: center;
  padding-bottom: 6px;
}
.notify-num {
  position: absolute;
  left: 8px;
  top: 19px;
  width: 16px;
  height: 16px;
  border-radius: 50%;
  background: #3d3c3a;
  border: 1px solid #999;
  font-size: 10px;
  font-weight: 700;
  line-height: 14px;
  text-align: center;
}

/* report page */
.report {
  width: 330px;
  height: 485px;
  background: #9e57a3;
  font-family: "Liberation Sans", sans-serif;
  display: flex;
  flex-direction: column;
  box-shadow: 0 0 3px rgba(0, 0, 0, 0.12);
}
.banner-wrap {
  height: 20px;
  padding: 1px 0 0 72px;
}
.banner {
  width: 213px;
  height: 19px;
  background: #7b2c8f;
  color: #fff;
  font-family: "DejaVu Sans", sans-serif;
  font-size: 9.5px;
  font-weight: 700;
  line-height: 15px;
  text-align: center;
  white-space: nowrap;
}
.kpis {
  display: flex;
  height: 32px;
  margin-top: 2px;
  padding-left: 1px;
}
.kpi {
  background: #fff;
  border: 3px solid #680b73;
  border-radius: 4px;
  display: flex;
  align-items: center;
  box-shadow: 0 0 2px #d9655a;
}
.kpi-profit {
  width: 106px;
  gap: 0;
  padding-left: 5px;
}
.kpi-cost {
  width: 105px;
  margin-left: 10px;
  gap: 1px;
  padding-left: 2px;
}
.kpi-sales {
  width: 94px;
  margin-left: 14px;
  gap: 1px;
  padding-left: 4px;
}
.kpi-text {
  display: flex;
  flex-direction: column;
  padding-top: 1px;
  color: #111;
}
.kpi-label {
  font-size: 5px;
  line-height: 7px;
  font-weight: 700;
  color: #e7695a;
}
.kpi-sales .kpi-label {
  font-size: 5.8px;
}
.kpi-text strong {
  line-height: 14px;
  margin-top: 1px;
  font-family: "DejaVu Sans", sans-serif;
  font-size: 11.5px;
}
.slicers {
  display: grid;
  grid-template-columns: 110px 104px 110px;
  grid-template-rows: 18px 19px 18px;
  column-gap: 2px;
  row-gap: 3px;
  margin: 7px 0 0 1px;
}
.slicer {
  background: #fff;
  display: flex;
  flex-direction: column;
  justify-content: space-between;
  padding: 1px 1px 1px 2px;
  overflow: hidden;
}
.slicer-name {
  font-size: 4.3px;
  line-height: 7px;
  font-weight: 700;
  color: #333;
  border-bottom: 1px solid #ddd;
}
.name-lg {
  font-size: 5px;
  color: #4b2d6b;
}
.name-xl {
  font-size: 5.6px;
}
.name-sm {
  font-size: 3.6px;
}
.drop {
  height: 8px;
  background: #680073;
  color: #fff;
  font-size: 4.4px;
  line-height: 8px;
  padding-left: 2px;
  position: relative;
}
.drop i {
  position: absolute;
  right: 2px;
  top: 1px;
  width: 4px;
  height: 4px;
  border-right: 1px solid #fff;
  border-bottom: 1px solid #fff;
  transform: rotate(45deg);
}
.ticker {
  height: 9px;
  padding: 0;
  display: flex;
  justify-content: space-between;
  white-space: nowrap;
  font-family: "Liberation Mono", monospace;
  font-size: 5.4px;
  line-height: 9px;
}
.visual-row {
  display: flex;
  justify-content: space-between;
}
.row-one {
  height: 113px;
  margin-top: 6px;
}
.row-two {
  height: 121px;
  margin-top: 7px;
}
.row-three {
  height: 111px;
  margin-top: 5px;
}
.visual {
  background: #680073;
  position: relative;
  color: #fff;
}
.visual-title {
  font-size: 5.8px;
  line-height: 8px;
  padding-left: 1px;
  font-weight: 700;
}
.title-thin {
  font-size: 4.4px;
}
.left-visual,
.donut-visual {
  width: 153px;
}
.right-visual {
  width: 168px;
}
.zone-visual {
  width: 164px;
}
.donut {
  position: absolute;
  left: 29px;
  top: 21px;
}
.slice-tag {
  position: absolute;
  font-size: 4.2px;
  line-height: 4.6px;
  font-weight: 700;
  text-align: center;
  background: rgba(60, 60, 60, 0.75);
  white-space: nowrap;
}
.tag-store {
  left: 90px;
  top: 61px;
}
.tag-online {
  left: 33px;
  top: 67px;
}
.tag-reseller {
  left: 33px;
  top: 37px;
}
.tag-catalog {
  left: 51px;
  top: 26px;
}
.legend {
  position: absolute;
  left: 133px;
  top: 44px;
  list-style: none;
  font-size: 4px;
  line-height: 6.2px;
  font-weight: 700;
}
.legend i {
  display: inline-block;
  width: 2.5px;
  height: 2.5px;
  border-radius: 50%;
  margin-right: 1px;
}
.dot-store {
  background: #e46c34;
}
.dot-online {
  background: #fff;
}
.dot-reseller {
  background: #6b47b8;
}
.dot-catalog {
  background: #000;
}
.hbars {
  display: flex;
  flex-direction: column;
  gap: 3.1px;
  margin-top: 6.5px;
}
.hbar {
  height: 10.5px;
  display: flex;
  align-items: center;
  font-size: 3.9px;
  font-weight: 700;
}
.hbar-name {
  width: 42px;
  text-align: right;
  white-space: nowrap;
  flex: none;
  margin-right: 2px;
}
.hbar i {
  height: 100%;
  background: #cc5a44;
  border: 1px solid #a64a58;
  flex: none;
}
.val {
  font-size: 4.5px;
  font-weight: 700;
  white-space: nowrap;
  line-height: 5px;
}
.hbar .val {
  margin-left: 2px;
  font-size: 4px;
}
.columns {
  position: absolute;
  display: flex;
  align-items: flex-end;
}
.col {
  display: flex;
  flex-direction: column;
  align-items: center;
  justify-content: flex-end;
  position: relative;
  flex: none;
}
.col i {
  width: 100%;
  background: #e46c34;
  border: 1px solid #b4483f;
  margin-top: 1px;
}
.tick {
  position: absolute;
  right: 50%;
  top: 100%;
  margin-top: 3px;
  font-size: 4.5px;
  line-height: 4px;
  font-weight: 700;
  white-space: nowrap;
  transform: rotate(-37deg);
  transform-origin: right top;
}
.cols-category {
  left: 13px;
  bottom: 32px;
  gap: 5px;
}
.cols-category .col {
  width: 17.5px;
}
.cols-sub {
  left: 15px;
  bottom: 32px;
  gap: 2.8px;
}
.cols-sub .col {
  width: 12px;
}
.cols-state {
  left: 8px;
  bottom: 13px;
  gap: 3.1px;
}
.cols-state .col {
  width: 11px;
}
```
